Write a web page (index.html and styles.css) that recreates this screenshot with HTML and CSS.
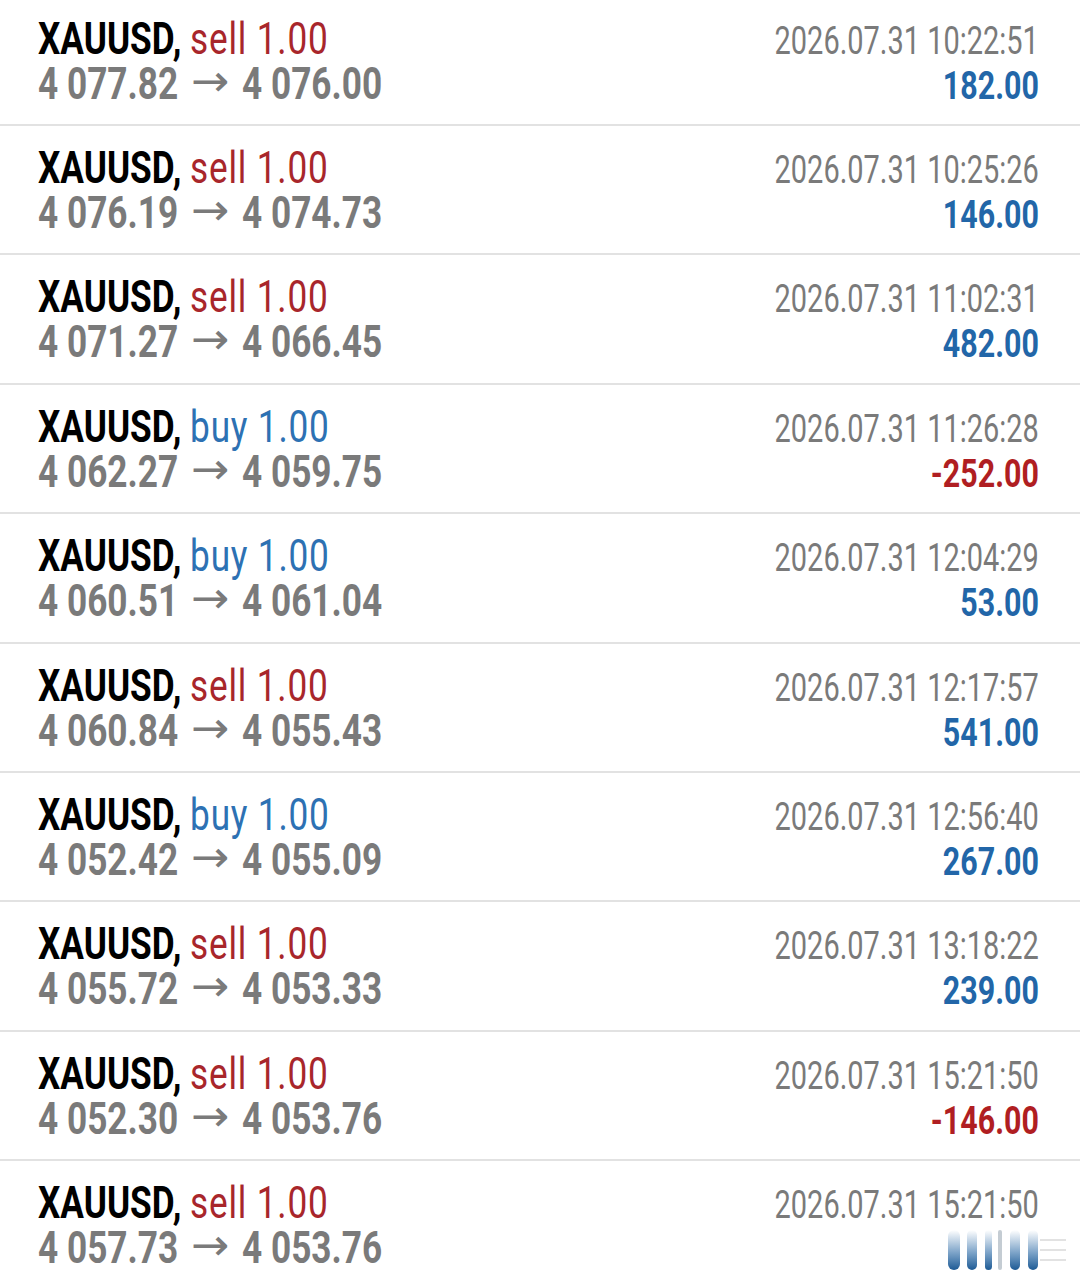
FILE: index.html
```html
<!DOCTYPE html>
<html lang="en">
<head>
  <meta charset="UTF-8" />
  <meta name="viewport" content="width=device-width, initial-scale=1.0"/>
  <title>History</title>
  <link rel="stylesheet" href="styles.css">
</head>
<body>

  <ul class="deals">
    <li class="deal">
      <div class="main">
        <div class="line"><span class="sym">XAUUSD,</span> <span class="sell">sell 1.00</span></div>
        <div class="line prices">4 077.82 <span class="arrow">→</span> 4 076.00</div>
      </div>
      <div class="side">
        <div class="line time">2026.07.31 10:22:51</div>
        <div class="line profit">182.00</div>
      </div>
    </li>
    <li class="deal">
      <div class="main">
        <div class="line"><span class="sym">XAUUSD,</span> <span class="sell">sell 1.00</span></div>
        <div class="line prices">4 076.19 <span class="arrow">→</span> 4 074.73</div>
      </div>
      <div class="side">
        <div class="line time">2026.07.31 10:25:26</div>
        <div class="line profit">146.00</div>
      </div>
    </li>
    <li class="deal">
      <div class="main">
        <div class="line"><span class="sym">XAUUSD,</span> <span class="sell">sell 1.00</span></div>
        <div class="line prices">4 071.27 <span class="arrow">→</span> 4 066.45</div>
      </div>
      <div class="side">
        <div class="line time">2026.07.31 11:02:31</div>
        <div class="line profit">482.00</div>
      </div>
    </li>
    <li class="deal">
      <div class="main">
        <div class="line"><span class="sym">XAUUSD,</span> <span class="buy">buy 1.00</span></div>
        <div class="line prices">4 062.27 <span class="arrow">→</span> 4 059.75</div>
      </div>
      <div class="side">
        <div class="line time">2026.07.31 11:26:28</div>
        <div class="line profit loss">-252.00</div>
      </div>
    </li>
    <li class="deal">
      <div class="main">
        <div class="line"><span class="sym">XAUUSD,</span> <span class="buy">buy 1.00</span></div>
        <div class="line prices">4 060.51 <span class="arrow">→</span> 4 061.04</div>
      </div>
      <div class="side">
        <div class="line time">2026.07.31 12:04:29</div>
        <div class="line profit">53.00</div>
      </div>
    </li>
    <li class="deal">
      <div class="main">
        <div class="line"><span class="sym">XAUUSD,</span> <span class="sell">sell 1.00</span></div>
        <div class="line prices">4 060.84 <span class="arrow">→</span> 4 055.43</div>
      </div>
      <div class="side">
        <div class="line time">2026.07.31 12:17:57</div>
        <div class="line profit">541.00</div>
      </div>
    </li>
    <li class="deal">
      <div class="main">
        <div class="line"><span class="sym">XAUUSD,</span> <span class="buy">buy 1.00</span></div>
        <div class="line prices">4 052.42 <span class="arrow">→</span> 4 055.09</div>
      </div>
      <div class="side">
        <div class="line time">2026.07.31 12:56:40</div>
        <div class="line profit">267.00</div>
      </div>
    </li>
    <li class="deal">
      <div class="main">
        <div class="line"><span class="sym">XAUUSD,</span> <span class="sell">sell 1.00</span></div>
        <div class="line prices">4 055.72 <span class="arrow">→</span> 4 053.33</div>
      </div>
      <div class="side">
        <div class="line time">2026.07.31 13:18:22</div>
        <div class="line profit">239.00</div>
      </div>
    </li>
    <li class="deal">
      <div class="main">
        <div class="line"><span class="sym">XAUUSD,</span> <span class="sell">sell 1.00</span></div>
        <div class="line prices">4 052.30 <span class="arrow">→</span> 4 053.76</div>
      </div>
      <div class="side">
        <div class="line time">2026.07.31 15:21:50</div>
        <div class="line profit loss">-146.00</div>
      </div>
    </li>
    <li class="deal">
      <div class="main">
        <div class="line"><span class="sym">XAUUSD,</span> <span class="sell">sell 1.00</span></div>
        <div class="line prices">4 057.73 <span class="arrow">→</span> 4 053.76</div>
      </div>
      <div class="side">
        <div class="line time">2026.07.31 15:21:50</div>
        <div class="line profit"></div>
      </div>
    </li>
  </ul>

  <!-- watermark over the last row -->
  <svg class="mark" width="130" height="46" viewBox="0 0 130 46">
    <defs>
      <linearGradient id="bar" x1="0" y1="0" x2="0" y2="1">
        <stop offset="0" stop-color="#2b6aa6" stop-opacity="0"/>
        <stop offset="0.55" stop-color="#2b6aa6" stop-opacity="0.6"/>
        <stop offset="1" stop-color="#1d5a94"/>
      </linearGradient>
    </defs>
    <rect x="0" y="4" width="12" height="40" rx="6" fill="url(#bar)"/>
    <rect x="19" y="4" width="10" height="40" rx="5" fill="url(#bar)"/>
    <rect x="37" y="4" width="7" height="40" rx="3.5" fill="url(#bar)"/>
    <rect x="50" y="4" width="4" height="40" rx="2" fill="#8a9aa8" opacity="0.5"/>
    <rect x="62" y="4" width="10" height="40" rx="5" fill="url(#bar)"/>
    <rect x="80" y="4" width="10" height="40" rx="5" fill="url(#bar)"/>
    <path d="M92 14 H118 M92 24 H118 M92 34 H118" stroke="#e2e2e2" stroke-width="2"/>
  </svg>

</body>
</html>
```

FILE: styles.css
```css
body {
  margin: 0;
  background: #ffffff;
  font-family: Roboto, "Liberation Sans", sans-serif;
}
.deals {
  list-style: none;
  margin: -3.4px 0 0;
  padding: 0;
}
.deal {
  display: flex;
  justify-content: space-between;
  height: 127.4px;
  border-bottom: 2px solid #e2e2e2;
}
.main {
  padding: 20px 0 0 38px;
}
.side {
  padding: 22px 41px 0 0;
  text-align: right;
}
.line {
  height: 45px;
  line-height: 45px;
  font-size: 44px;
  white-space: nowrap;
}
.main .line {
  transform: scaleX(0.8);
  transform-origin: left center;
}
.side .line {
  transform: scaleX(0.8);
  transform-origin: right center;
}
.side .time {
  transform: scaleX(0.762);
}
.sym {
  font-weight: bold;
  color: #000;
}
.sell {
  color: #a8262b;
  letter-spacing: 1px;
}
.buy {
  color: #2d71b3;
  letter-spacing: 1px;
}
.prices {
  font-weight: bold;
  color: #7a7a7a;
}
.arrow {
  display: inline-block;
  width: 48px;
  margin: 0 5px;
  text-align: center;
  font-family: "DejaVu Sans", sans-serif;
  font-weight: normal;
  font-size: 44px;
  line-height: 20px;
  vertical-align: 3px;
  transform: scaleX(1.3);
}
.time {
  color: #7a7a7a;
  font-size: 38px;
}
.profit {
  font-weight: bold;
  color: #2266a8;
  font-size: 38px;
}
.profit.loss {
  color: #b01e22;
}
.mark {
  position: absolute;
  left: 948px;
  top: 1226px;
}
```
